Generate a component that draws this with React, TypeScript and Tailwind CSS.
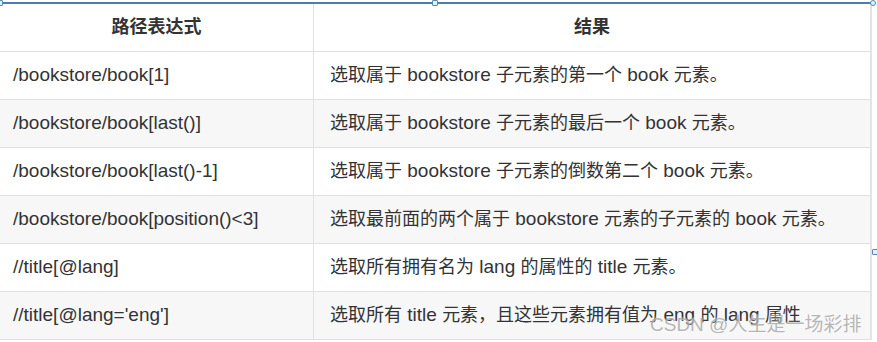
import React from "react";

const rows: [string, string][] = [
  ["/bookstore/book[1]", "选取属于 bookstore 子元素的第一个 book 元素。"],
  ["/bookstore/book[last()]", "选取属于 bookstore 子元素的最后一个 book 元素。"],
  ["/bookstore/book[last()-1]", "选取属于 bookstore 子元素的倒数第二个 book 元素。"],
  ["/bookstore/book[position()<3]", "选取最前面的两个属于 bookstore 元素的子元素的 book 元素。"],
  ["//title[@lang]", "选取所有拥有名为 lang 的属性的 title 元素。"],
  ["//title[@lang='eng']", "选取所有 title 元素，且这些元素拥有值为 eng 的 lang 属性"],
];

const CJK = /([\u3000-\u303f\u4e00-\u9fff\uff00-\uffef]+)/;

function Mixed({ text }: { text: string }) {
  const parts = text.split(CJK).filter(Boolean);
  return (
    <span className="whitespace-pre">
      {parts.map((p, i) =>
        CJK.test(p) ? (
          <span key={i} className="text-[18px]">
            {p}
          </span>
        ) : (
          <React.Fragment key={i}>{p}</React.Fragment>
        )
      )}
    </span>
  );
}

function Handle({ className }: { className: string }) {
  return (
    <div
      className={
        "absolute w-[6px] h-[6px] bg-[#dff3fb] border border-[#5b86b8] rounded-[1px] " +
        className
      }
    />
  );
}

export default function App() {
  return (
    <div
      className="relative w-[877px] h-[342px] bg-white overflow-hidden text-[#333]"
      style={{ fontFamily: '"Liberation Sans", "Noto Sans CJK SC", sans-serif' }}
    >
      <div className="h-[2px]" />
      <div className="h-[2px] w-[874px] bg-[#4f7db3]" />
      <div className="w-[872px] border-r-2 border-[#e4e4e4]">
        <div className="flex h-[48px] border-b border-[#e0e0e0] bg-white font-bold text-[18px]">
          <div className="w-[314px] border-r border-[#e0e0e0] flex items-center justify-center">
            路径表达式
          </div>
          <div className="flex-1 flex items-center justify-center">结果</div>
        </div>
        {rows.map(([a, b], i) => (
          <div
            key={i}
            className={
              "flex h-[48px] border-b border-[#e0e0e0] text-[19px] " +
              (i % 2 === 1 ? "bg-[#f7f7f7]" : "bg-white")
            }
          >
            <div className="w-[314px] border-r border-[#e0e0e0] flex items-center pl-[13px]">
              {a}
            </div>
            <div className="flex-1 flex items-center pl-[16px] whitespace-nowrap">
              <Mixed text={b} />
            </div>
          </div>
        ))}
      </div>
      <Handle className="left-[-3px] top-[0px]" />
      <Handle className="left-[432px] top-[0px]" />
      <Handle className="left-[870px] top-[0px] rounded-full" />
      <Handle className="left-[872px] top-[249px]" />
      <div
        className="absolute left-[650px] top-[311px] text-[19px] text-[rgba(150,150,150,0.7)] whitespace-nowrap"
        style={{ textShadow: "0 0 2px rgba(255,255,255,0.9)" }}
      >
        CSDN @人生是一场彩排
      </div>
    </div>
  );
}
